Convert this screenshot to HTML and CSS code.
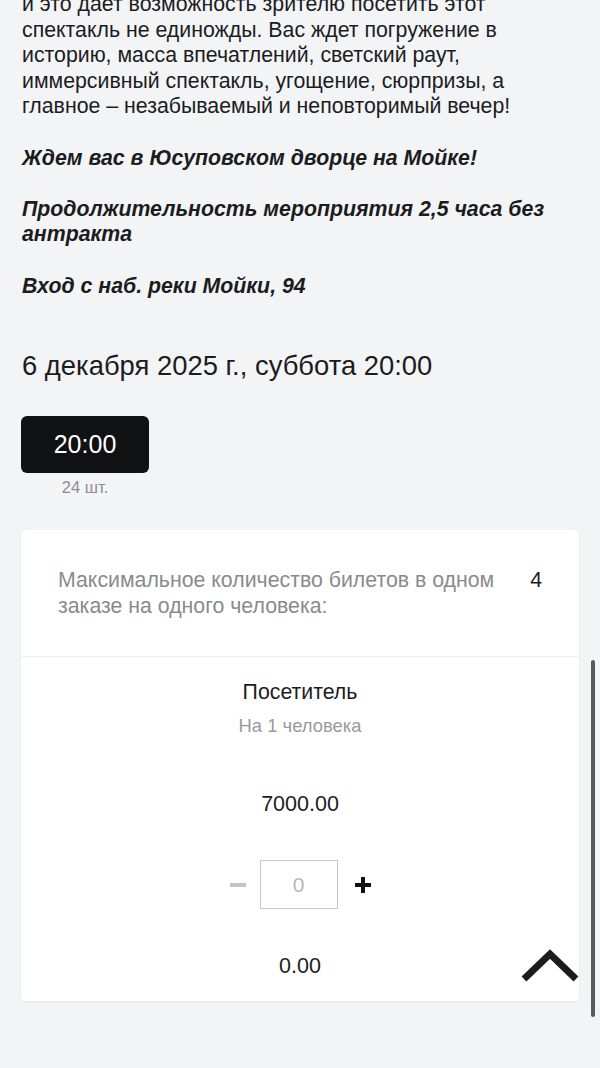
FILE: index.html
```html
<!DOCTYPE html>
<html lang="ru">
<head>
    <meta charset="UTF-8">
    <meta name="viewport" content="width=device-width, initial-scale=1.0">
    <title>Юсуповский дворец - билеты</title>
    <link rel="stylesheet" href="styles.css">
</head>
<body>

<div class="page">
    <div class="description">
        <p>и это дает возможность зрителю посетить этот спектакль не единожды. Вас ждет погружение в историю, масса впечатлений, светский раут, иммерсивный спектакль, угощение, сюрпризы, а главное – незабываемый и неповторимый вечер!</p>
        <p class="accent">Ждем вас в Юсуповском дворце на Мойке!</p>
        <p class="accent">Продолжительность мероприятия 2,5 часа без антракта</p>
        <p class="accent">Вход с наб. реки Мойки, 94</p>
    </div>

    <h2 class="event-date">6 декабря 2025 г., суббота 20:00</h2>

    <div class="sessions">
        <div class="session">
            <button class="session-time">20:00</button>
            <span class="session-left">24 шт.</span>
        </div>
    </div>

    <div class="tickets">
        <div class="tickets-limit">
            <span class="limit-text">Максимальное количество билетов в одном заказе на одного человека:</span>
            <span class="limit-value">4</span>
        </div>
        <div class="ticket">
            <div class="ticket-name">Посетитель</div>
            <div class="ticket-note">На 1 человека</div>
            <div class="ticket-price">7000.00</div>
            <div class="counter">
                <button class="counter-btn minus">
                    <svg width="16" height="16" viewBox="0 0 16 16"><path d="M0 8h16" stroke="#c4c4c6" stroke-width="4"/></svg>
                </button>
                <input class="counter-input" type="text" value="0">
                <button class="counter-btn plus">
                    <svg width="16" height="16" viewBox="0 0 16 16"><path d="M8 0v16M0 8h16" stroke="#111" stroke-width="4"/></svg>
                </button>
            </div>
            <div class="ticket-total">0.00</div>
        </div>
    </div>
</div>

<button class="to-top" aria-label="Наверх">
    <svg width="60" height="38" viewBox="0 0 60 38"><path d="M4 32L30 7L56 32" fill="none" stroke="#1c1c1e" stroke-width="7"/></svg>
</button>
<div class="scroll-bar"></div>

</body>
</html>
```

FILE: styles.css
```css
body {
    font-family: "Liberation Sans", Arial, sans-serif;
    margin: 0;
    padding: 0;
    background-color: #f3f4f6;
    color: #1c1c1e;
}
.page {
    padding: 0 21px 68px;
}
.description {
    margin-top: -8px;
    max-width: 540px;
    font-size: 21.3px;
    line-height: 25.6px;
}
.description p {
    margin: 0 0 25.6px;
    padding-left: 1px;
}
.description .accent {
    font-weight: bold;
    font-style: italic;
}
.event-date {
    font-size: 27.4px;
    font-weight: normal;
    margin: 51px 0 34px;
    padding-left: 1px;
    line-height: 32px;
}
.sessions {
    display: flex;
    margin-bottom: 33px;
}
.session {
    display: flex;
    flex-direction: column;
    align-items: center;
}
.session-time {
    width: 128px;
    height: 57px;
    border: none;
    border-radius: 6px;
    background-color: #111214;
    color: white;
    font-family: inherit;
    font-size: 25px;
}
.session-left {
    margin-top: 5px;
    font-size: 16.5px;
    color: #8e8e93;
}
.tickets {
    background-color: white;
    border-radius: 5px;
    box-shadow: 0 1px 2px rgba(0, 0, 0, 0.08);
}
.tickets-limit {
    display: flex;
    justify-content: space-between;
    gap: 24px;
    padding: 37px 37px 37px;
    border-bottom: 1px solid #f0f0f0;
    font-size: 21.3px;
    line-height: 26px;
}
.limit-text {
    color: #8a8a8e;
}
.limit-value {
    color: #1c1c1e;
}
.ticket {
    display: flex;
    flex-direction: column;
    align-items: center;
    padding: 22px 0 22px;
}
.ticket-name {
    font-size: 21.3px;
    line-height: 26px;
}
.ticket-note {
    margin-top: 10px;
    font-size: 18.4px;
    line-height: 22px;
    color: #9a9a9e;
}
.ticket-price {
    margin-top: 54px;
    font-size: 21.5px;
    line-height: 26px;
}
.counter {
    display: flex;
    align-items: center;
    margin-top: 43px;
}
.counter-btn {
    width: 38px;
    height: 38px;
    border: none;
    background: none;
    padding: 0;
    display: flex;
    align-items: center;
    justify-content: center;
}
.counter-btn.minus {
    margin-right: 3px;
}
.counter-btn.plus {
    margin-left: 6px;
}
.counter-input {
    width: 78px;
    height: 49px;
    box-sizing: border-box;
    border: 1px solid #c8c8c8;
    text-align: center;
    font-family: inherit;
    font-size: 21px;
    color: #b8b8bc;
    outline: none;
}
.ticket-total {
    margin-top: 44px;
    font-size: 21.5px;
    line-height: 26px;
}
.to-top {
    position: fixed;
    right: 20px;
    bottom: 83px;
    border: none;
    background: none;
    padding: 0;
    line-height: 0;
}
.scroll-bar {
    position: fixed;
    right: 5px;
    top: 660px;
    width: 4px;
    height: 357px;
    border-radius: 2px;
    background-color: #5a5a5e;
}
```
